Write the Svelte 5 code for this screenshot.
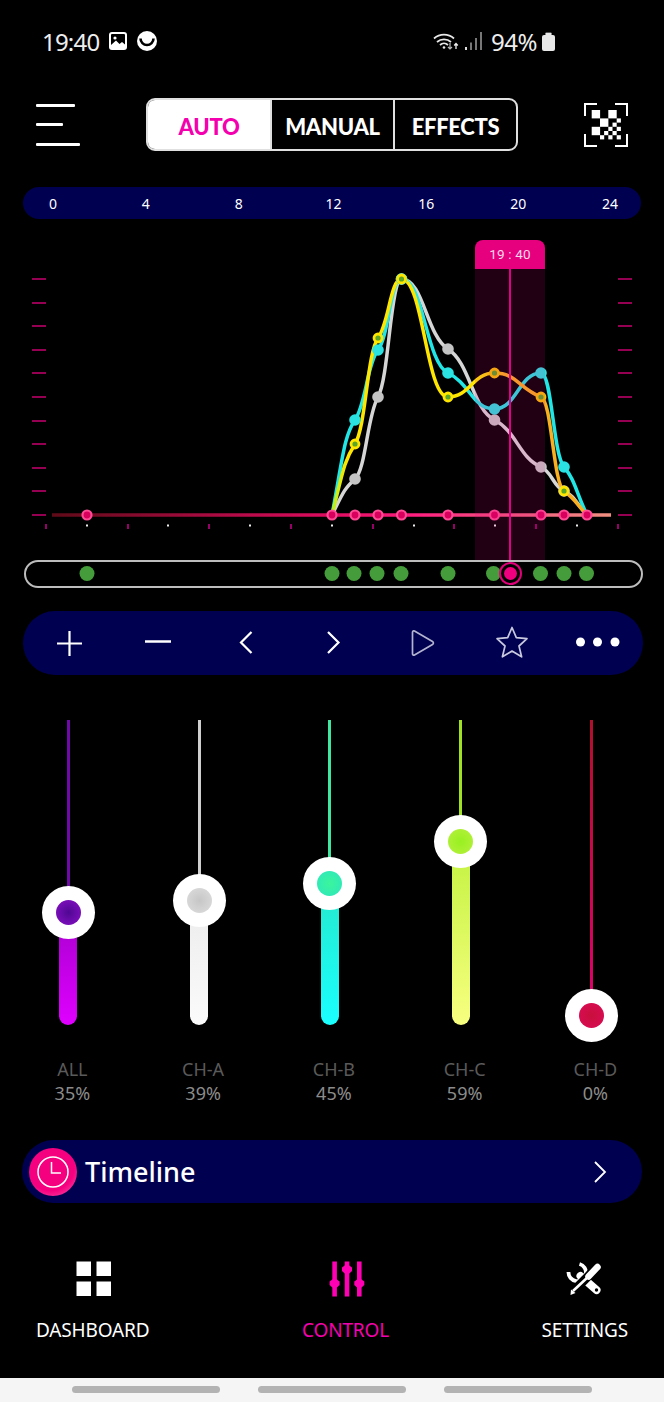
<script>
  const xs = [332, 355, 378, 401.5, 448, 494.5, 541, 564, 587];
  const series = [
    { id: 'w', stroke: '#d6d6d6', ys: [515, 479, 397, 279, 349, 420, 467, 491, 515], kind: 'gray' },
    { id: 'c', stroke: '#22e6e6', ys: [515, 420, 350, 279, 373, 409, 373, 467, 515], kind: 'cyan' },
    { id: 'y', stroke: 'url(#yellowLine)', ys: [515, 444, 338, 279, 397, 373, 397, 491, 515], kind: 'yellow' }
  ];
  function curve(ys) {
    const n = xs.length;
    const d = [];
    for (let i = 0; i < n - 1; i++) d.push((ys[i + 1] - ys[i]) / (xs[i + 1] - xs[i]));
    const m = [d[0] * 1.3];
    for (let i = 1; i < n - 1; i++) {
      m.push(d[i - 1] * d[i] <= 0 ? 0 : (0.42 * 2 * d[i - 1] * d[i]) / (d[i - 1] + d[i]));
    }
    m.push(d[n - 2]);
    let p = `M${xs[0]} ${ys[0]}`;
    for (let i = 0; i < n - 1; i++) {
      const h = (xs[i + 1] - xs[i]) / 2.1;
      p += ` C${xs[i] + h} ${ys[i] + m[i] * h} ${xs[i + 1] - h} ${ys[i + 1] - m[i + 1] * h} ${xs[i + 1]} ${ys[i + 1]}`;
    }
    return p;
  }
  const scale = [
    { h: 0, cls: '' },
    { h: 4, cls: '' },
    { h: 8, cls: '' },
    { h: 12, cls: 'wide' },
    { h: 16, cls: 'wide' },
    { h: 20, cls: 'mid' },
    { h: 24, cls: '' }
  ];
  const levelYs = [279, 303, 326, 350, 373, 397, 421, 444, 468, 491, 515];
  const tickXs = [46, 87, 128, 168, 209, 250, 291, 332, 373, 414, 454, 495, 536, 577, 618];
  const pinkDots = [87, ...xs];
  const greenDots = [87, 332, 354, 377, 401, 448, 493.5, 540.5, 564, 586.5];
  const sliders = [
    { name: 'ALL', value: '35%', knob: 192.5, line: '#6f0aa8', bar: 'linear-gradient(#a800cf,#df00ff)', dot: 'radial-gradient(circle,#4f0892,#8a10c8)' },
    { name: 'CH-A', value: '39%', knob: 180.5, line: '#cfcfcf', bar: 'linear-gradient(#ececec,#fbfbfb)', dot: 'radial-gradient(circle,#c6c6c6,#dedede)' },
    { name: 'CH-B', value: '45%', knob: 163, line: '#3fe6a0', bar: 'linear-gradient(#25e8cc,#1affff)', dot: 'radial-gradient(circle,#3cf59c,#2ce6c0)' },
    { name: 'CH-C', value: '59%', knob: 121.5, line: '#9fe224', bar: 'linear-gradient(#c2f240,#f8ff80)', dot: 'radial-gradient(circle,#98f020,#b8f040)' },
    { name: 'CH-D', value: '0%', knob: 295.5, line: 'linear-gradient(#b0102c,#e0006e)', bar: 'none', dot: 'radial-gradient(circle,#c8103c,#dc0a58)' }
  ];
  const F = 4.2;
  const qr = [
    [7.7, 7, 8.4], [24.3, 7, 8.4], [16, 15.4, 8.4], [7.7, 23.8, 8.4],
    [32.7, 15.4, F], [28.5, 19.6, F], [32.7, 23.8, F], [24.3, 23.8, F],
    [28.5, 28, F], [20.1, 28, F], [24.3, 32.2, F], [32.7, 32.2, F], [16, 32.2, F]
  ];
</script>

<div class="app">
  <div class="status">
    <span class="clock">19:40</span>
    <svg class="pic" viewBox="0 0 18 18" width="18" height="18">
      <rect width="18" height="18" rx="3" fill="#fff" />
      <rect x="2" y="2" width="14" height="14" rx="1" fill="#000" />
      <path d="M2 13 7 8.500 10.500 12 13 10 16 12.500V16H2Z" fill="#fff" />
      <circle cx="6" cy="6" r="1.600" fill="#fff" />
    </svg>
    <svg class="face" viewBox="0 0 20 20" width="20" height="20">
      <circle cx="10" cy="10" r="10" fill="#fff" />
      <path d="M3.500 7.500a6.500 6.500 0 0 0 13 0" fill="none" stroke="#000" stroke-width="2.600" />
    </svg>
    <svg class="wifi" viewBox="0 0 26 18" width="26" height="18">
      <g fill="none" stroke="#e8e8e8" stroke-width="1.700">
        <path d="M1 6.500a15 15 0 0 1 20 0" />
        <path d="M4 10a10.500 10.500 0 0 1 14 0" />
        <path d="M7 13a6 6 0 0 1 8 0" />
      </g>
      <circle cx="11" cy="15.500" r="1.300" fill="#e8e8e8" />
      <path d="M17 11v6M15 15l2 2 2-2" fill="none" stroke="#bbb" stroke-width="1.200" />
      <path d="M23 17v-5M21.200 13.500l1.800-2 1.800 2" fill="none" stroke="#eee" stroke-width="1.300" />
    </svg>
    <svg class="signal" viewBox="0 0 17 18" width="17" height="18">
      <rect x="0" y="15" width="2" height="3" fill="#ddd" />
      <rect x="5" y="10.500" width="2" height="7.500" fill="#777" />
      <rect x="10" y="6" width="2" height="12" fill="#777" />
      <rect x="15" y="0" width="2" height="18" fill="#777" />
    </svg>
    <span class="pct">94%</span>
    <svg class="batt" viewBox="0 0 13 19" width="13" height="19">
      <rect x="3.500" y="0" width="6" height="3" rx="1" fill="#555" />
      <rect x="3.500" y="1" width="6" height="3" fill="#e8e8e8" />
      <rect x="0" y="3" width="13" height="16" rx="2" fill="#e8e8e8" />
    </svg>
  </div>

  <div class="header">
    <div class="burger"><i class="b1"></i><i class="b2"></i><i class="b3"></i></div>
    <div class="seg">
      <span class="on">AUTO</span>
      <span>MANUAL</span>
      <span>EFFECTS</span>
    </div>
    <svg class="qr" viewBox="0 0 44 44" width="44" height="44">
      <path d="M1 13V1H13M31 1H43V13M1 31V43H13M31 43H43V31" fill="none" stroke="#fff" stroke-width="2" />
      {#each qr as [x, y, s]}
        <rect {x} {y} width={s} height={s} fill="#fff" />
      {/each}
    </svg>
  </div>

  <div class="hours">
    {#each scale as t}<span class={t.cls}>{t.h}</span>{/each}
  </div>

  <svg class="chart" viewBox="0 219 664 371" width="664" height="371">
    <defs>
      <linearGradient id="base" gradientUnits="userSpaceOnUse" x1="52" y1="0" x2="611" y2="0">
        <stop offset="0" stop-color="#5f0a18" />
        <stop offset="0.5" stop-color="#e00c60" />
        <stop offset="0.65" stop-color="#ff1f80" />
        <stop offset="0.85" stop-color="#f26080" />
        <stop offset="1" stop-color="#f09080" />
      </linearGradient>
      <linearGradient id="yellowLine" gradientUnits="userSpaceOnUse" x1="332" y1="0" x2="587" y2="0">
        <stop offset="0" stop-color="#b8f020" />
        <stop offset="0.06" stop-color="#ffe600" />
        <stop offset="0.58" stop-color="#ffe600" />
        <stop offset="0.68" stop-color="#f8b020" />
        <stop offset="1" stop-color="#f8ae20" />
      </linearGradient>
    </defs>
    {#each levelYs as y}
      <line x1="32" x2="46" y1={y} y2={y} stroke="#c8006e" stroke-width="1.500" />
      <line x1="618" x2="632" y1={y} y2={y} stroke="#c8006e" stroke-width="1.500" />
    {/each}
    {#each tickXs as x, i}
      {#if i % 2 === 0}
        <line x1={x} x2={x} y1="524" y2="529" stroke="#c8008c" stroke-width="1.500" />
      {:else}
        <rect x={x - 1} y="524.500" width="2" height="2" fill="#eee" />
      {/if}
    {/each}

    <line x1="52" x2="611" y1="515" y2="515" stroke="url(#base)" stroke-width="3.500" />

    {#each series as s}
      <path d={curve(s.ys)} fill="none" stroke={s.stroke} stroke-width="3.500" />
    {/each}
    {#each series as s}
      {#each s.ys as y, i}
        {#if i > 0 && i < xs.length - 1 && s.kind === 'gray'}
          <circle cx={xs[i]} cy={y} r="5.800" fill="#c4c4c4" />
        {:else if i > 0 && i < xs.length - 1 && s.kind === 'cyan'}
          <circle cx={xs[i]} cy={y} r="5.800" fill="#2ae2e2" />
        {/if}
      {/each}
    {/each}
    {#each series[2].ys as y, i}
      {#if i > 0 && i < xs.length - 1}
        <circle cx={xs[i]} cy={y} r="4" fill="#5aa528" stroke={i === 5 || i === 6 ? '#f8c000' : '#ffe600'} stroke-width="2.800" />
      {/if}
    {/each}
    {#each pinkDots as x}
      <circle cx={x} cy="515" r="4.500" fill="#d8005c" stroke="#ff4b95" stroke-width="2.200" />
    {/each}

    <rect x="475" y="269" width="70" height="292" fill="#e6007e" opacity="0.14" />
    <path d="M475 269V248a8 8 0 0 1 8-8H537a8 8 0 0 1 8 8V269Z" fill="#e6007e" />
    <text x="510" y="259" class="flag" text-anchor="middle">19 : 40</text>
    <line x1="510" x2="510" y1="269" y2="563" stroke="#e0008a" stroke-width="2" />

    <rect x="25" y="561" width="617" height="26" rx="13" fill="#000" stroke="#bdbdbd" stroke-width="2" />
    {#each greenDots as x}
      <circle cx={x} cy="573.500" r="7.500" fill="#459c3a" />
    {/each}
    <circle cx="510.500" cy="573.500" r="10.500" fill="#000" stroke="#e0007a" stroke-width="2" />
    <circle cx="510.500" cy="573.500" r="6.500" fill="#f0007f" />
  </svg>

  <div class="actions">
    <svg viewBox="0 0 44 44" width="44" height="44"><path d="M21.500 10V35M9 22.500H34" stroke="#fff" stroke-width="2.200" fill="none" /></svg>
    <svg viewBox="0 0 44 44" width="44" height="44"><path d="M9 20.500H35" stroke="#fff" stroke-width="2.500" fill="none" /></svg>
    <svg viewBox="0 0 44 44" width="44" height="44"><path d="M27.500 11 17 21.500 27.500 32" stroke="#fff" stroke-width="2.200" fill="none" /></svg>
    <svg viewBox="0 0 44 44" width="44" height="44"><path d="M16 11 26.500 21.500 16 32" stroke="#fff" stroke-width="2.200" fill="none" /></svg>
    <svg viewBox="0 0 44 44" width="44" height="44"><path d="M11.500 11.500C11.500 10 12.500 9.500 13.500 10L31.500 20.500C32.700 21.200 32.700 22.800 31.500 23.500L13.500 34C12.500 34.500 11.500 34 11.500 32.800Z" stroke="#b4b4d0" stroke-width="1.700" fill="none" /></svg>
    <svg viewBox="0 0 44 44" width="44" height="44"><path d="M23 6.500 27.300 16.700 38 17.700 30 25 32.600 35.800 23 30 13.400 35.800 16 25 8 17.700 18.700 16.700Z" stroke="#c8c8de" stroke-width="1.700" stroke-linejoin="round" fill="none" /></svg>
    <svg viewBox="0 0 44 44" width="44" height="44"><circle cx="3.500" cy="21" r="4.500" fill="#fff" /><circle cx="20.500" cy="21" r="4.500" fill="#fff" /><circle cx="38" cy="21" r="4.500" fill="#fff" /></svg>
  </div>

  <div class="sliders">
    {#each sliders as s}
      <div class="col">
        <div class="track">
          <div class="line" style:background={s.line} style:height="{s.knob}px"></div>
          <div class="bar" style:background={s.bar} style:top="{s.knob}px"></div>
          <div class="knob" style:top="{s.knob}px"><div class="dot" style:background={s.dot}></div></div>
        </div>
        <div class="name">{s.name}</div>
        <div class="val">{s.value}</div>
      </div>
    {/each}
  </div>

  <div class="timeline">
    <div class="clockbtn">
      <svg viewBox="0 0 34 34" width="34" height="34">
        <circle cx="17" cy="17" r="15" fill="none" stroke="#fff" stroke-width="1.500" />
        <path d="M15.500 7V18H25" fill="none" stroke="#fff" stroke-width="1.500" />
      </svg>
    </div>
    <span class="tl">Timeline</span>
    <svg class="chev" viewBox="0 0 14 24" width="14" height="24"><path d="M2 2 12 12 2 22" fill="none" stroke="#fff" stroke-width="1.800" /></svg>
  </div>

  <div class="nav">
    <div class="item">
      <svg viewBox="0 0 36 36" width="36" height="36">
        <rect x="1.500" y="0.500" width="14.500" height="14.500" fill="#fff" />
        <rect x="21.500" y="0.500" width="14.500" height="14.500" fill="#fff" />
        <rect x="1.500" y="20.500" width="14.500" height="14.500" fill="#fff" />
        <rect x="21.500" y="20.500" width="14.500" height="14.500" fill="#fff" />
      </svg>
      <span>DASHBOARD</span>
    </div>
    <div class="item active">
      <svg viewBox="0 0 36 36" width="36" height="36" fill="#ff00b4">
        <rect x="5.300" y="0.500" width="4.600" height="35" />
        <rect x="17.700" y="0.500" width="4.600" height="35" />
        <rect x="30" y="0.500" width="4.600" height="35" />
        <path d="M5.300 18.500 7.600 17 9.900 18.500 12.600 20.500V24L9.900 26.500H5.300L2.600 24V20.500Z" />
        <path d="M17.700 4.500 20 3 22.300 4.500 25 6.500V10L22.300 12.500H17.700L15 10V6.500Z" />
        <path d="M30 18.500 32.300 17 34.600 18.500 37.300 20.500V24L34.600 26.500H30L27.300 24V20.500Z" />
      </svg>
      <span>CONTROL</span>
    </div>
    <div class="item">
      <svg viewBox="0 0 36 36" width="36" height="36">
        <g transform="translate(0.500 2)">
          <path d="M12 1A8.700 8.700 0 1 1 1 9" fill="none" stroke="#fff" stroke-width="3.800" />
          <path d="M13 13 29 27" stroke="#fff" stroke-width="8" stroke-linecap="round" />
          <circle cx="29" cy="27" r="1.700" fill="#000" />
          <path d="M29.500 3.500 20 14 5 29" stroke="#000" stroke-width="9" fill="none" />
          <path d="M30 4 21 13.500" stroke="#fff" stroke-width="6.500" stroke-linecap="round" />
          <path d="M21 13.500 5.500 28" stroke="#fff" stroke-width="2.600" />
          <path d="M3 32 3.500 26.500 8 30Z" fill="#fff" />
        </g>
      </svg>
      <span>SETTINGS</span>
    </div>
  </div>

  <div class="sys"><i></i><i></i><i></i></div>
</div>

<style>
  :global(body) {
    margin: 0;
    background: #000;
  }
  .app {
    width: 664px;
    height: 1402px;
    background: #000;
    color: #fff;
    display: flex;
    flex-direction: column;
    overflow: hidden;
    font-family: "Noto Sans", sans-serif;
  }
  .status {
    height: 82px;
    flex: none;
    display: flex;
    align-items: center;
    padding-left: 42px;
    color: #eee;
    font-size: 24px;
    box-sizing: border-box;
  }
  .clock {
    width: 58px;
    letter-spacing: -0.8px;
    white-space: nowrap;
  }
  .pic {
    margin-left: 9px;
  }
  .face {
    margin-left: 10px;
  }
  .wifi {
    margin-left: 276px;
  }
  .signal {
    margin-left: 6px;
  }
  .pct {
    margin-left: 9px;
    width: 47px;
    letter-spacing: -0.5px;
    white-space: nowrap;
  }
  .batt {
    margin-left: 4px;
  }
  .header {
    margin-top: 16px;
    height: 53px;
    padding: 0 36px;
    display: flex;
    justify-content: space-between;
    align-items: center;
    flex: none;
  }
  .burger {
    width: 44px;
    height: 42px;
    display: flex;
    flex-direction: column;
    justify-content: space-between;
  }
  .burger i {
    display: block;
    height: 3px;
    background: #fff;
    border-radius: 1px;
  }
  .b1 { width: 39px; }
  .b2 { width: 27px; }
  .b3 { width: 44px; }
  .seg {
    width: 372px;
    height: 53px;
    box-sizing: border-box;
    border: 2px solid #e0e0e0;
    border-radius: 9px;
    display: grid;
    grid-template-columns: 122px 123px 1fr;
    overflow: hidden;
    font-family: "Lato", sans-serif;
    font-weight: 900;
    font-size: 22px;
    letter-spacing: -0.3px;
  }
  .seg span {
    display: flex;
    align-items: center;
    justify-content: center;
    border-left: 2px solid #e0e0e0;
    padding-top: 3px;
  }
  .seg .on {
    background: #fff;
    color: #f500ae;
    border-left: 0;
  }
  .qr {
    display: block;
  }
  .hours {
    margin: 36px 0 0 23px;
    width: 618px;
    height: 32px;
    box-sizing: border-box;
    padding: 0 16px 0 15px;
    background: #000050;
    border-radius: 16px;
    display: flex;
    justify-content: space-between;
    align-items: center;
    font-size: 14px;
    flex: none;
  }
  .hours span {
    width: 30px;
    box-sizing: border-box;
    text-align: center;
  }
  .hours .wide {
    padding-left: 4px;
  }
  .hours .mid {
    padding-left: 2px;
  }
  .chart {
    display: block;
    flex: none;
  }
  .flag {
    font-family: "Roboto", sans-serif;
    font-size: 13.500px;
    fill: #f6d8ea;
    letter-spacing: 0.2px;
  }
  .actions {
    margin: 21px 0 0 23px;
    width: 620px;
    height: 64px;
    box-sizing: border-box;
    padding: 0 22px 0 24.500px;
    background: #000050;
    border-radius: 32px;
    display: flex;
    justify-content: space-between;
    align-items: center;
    flex: none;
  }
  .actions svg {
    display: block;
    overflow: visible;
  }
  .sliders {
    margin-top: 45px;
    padding-left: 3px;
    display: grid;
    grid-template-columns: repeat(5, 130.750px);
    flex: none;
  }
  .col {
    display: flex;
    flex-direction: column;
    align-items: center;
  }
  .track {
    position: relative;
    width: 18px;
    height: 305px;
    margin-bottom: 32px;
  }
  .line {
    position: absolute;
    left: 7.500px;
    top: 0;
    width: 3px;
  }
  .bar {
    position: absolute;
    left: 0;
    right: 0;
    bottom: 0;
    border-radius: 0 0 9px 9px;
  }
  .knob {
    position: absolute;
    left: 9px;
    width: 53px;
    height: 53px;
    margin: -26.500px 0 0 -26.500px;
    border-radius: 50%;
    background: #fff;
    display: flex;
    align-items: center;
    justify-content: center;
  }
  .dot {
    width: 25px;
    height: 25px;
    border-radius: 50%;
  }
  .name,
  .val {
    margin-left: 8px;
    line-height: 24px;
    font-size: 18px;
    white-space: nowrap;
  }
  .name {
    color: #5a5a5a;
  }
  .val {
    color: #8c8c8c;
  }
  .timeline {
    margin: 35px 0 0 22px;
    width: 620px;
    height: 63px;
    box-sizing: border-box;
    background: #000050;
    border-radius: 32px;
    display: flex;
    align-items: center;
    padding-left: 7px;
    flex: none;
  }
  .clockbtn {
    width: 48px;
    height: 48px;
    border-radius: 50%;
    background: radial-gradient(circle at 45% 40%, #f5007f 60%, #ff5fb0 100%);
    display: flex;
    align-items: center;
    justify-content: center;
    flex: none;
  }
  .tl {
    margin-left: 8px;
    font-size: 27px;
    font-weight: 500;
    flex: 1;
  }
  .chev {
    margin-right: 35px;
  }
  .nav {
    margin-top: 58px;
    padding: 0 36px;
    display: flex;
    justify-content: space-between;
    flex: none;
  }
  .item {
    display: flex;
    flex-direction: column;
    align-items: center;
    gap: 21px;
    font-size: 19px;
    line-height: 24px;
    letter-spacing: -0.15px;
  }
  .item svg {
    display: block;
    overflow: visible;
  }
  .active {
    color: #f500ae;
  }
  .sys {
    margin-top: auto;
    height: 24px;
    background: #f5f5f5;
    display: flex;
    gap: 38px;
    padding: 8px 0 0 72px;
    box-sizing: border-box;
    flex: none;
  }
  .sys i {
    display: block;
    width: 148px;
    height: 7px;
    border-radius: 4px;
    background: #b3b3b3;
  }
</style>
